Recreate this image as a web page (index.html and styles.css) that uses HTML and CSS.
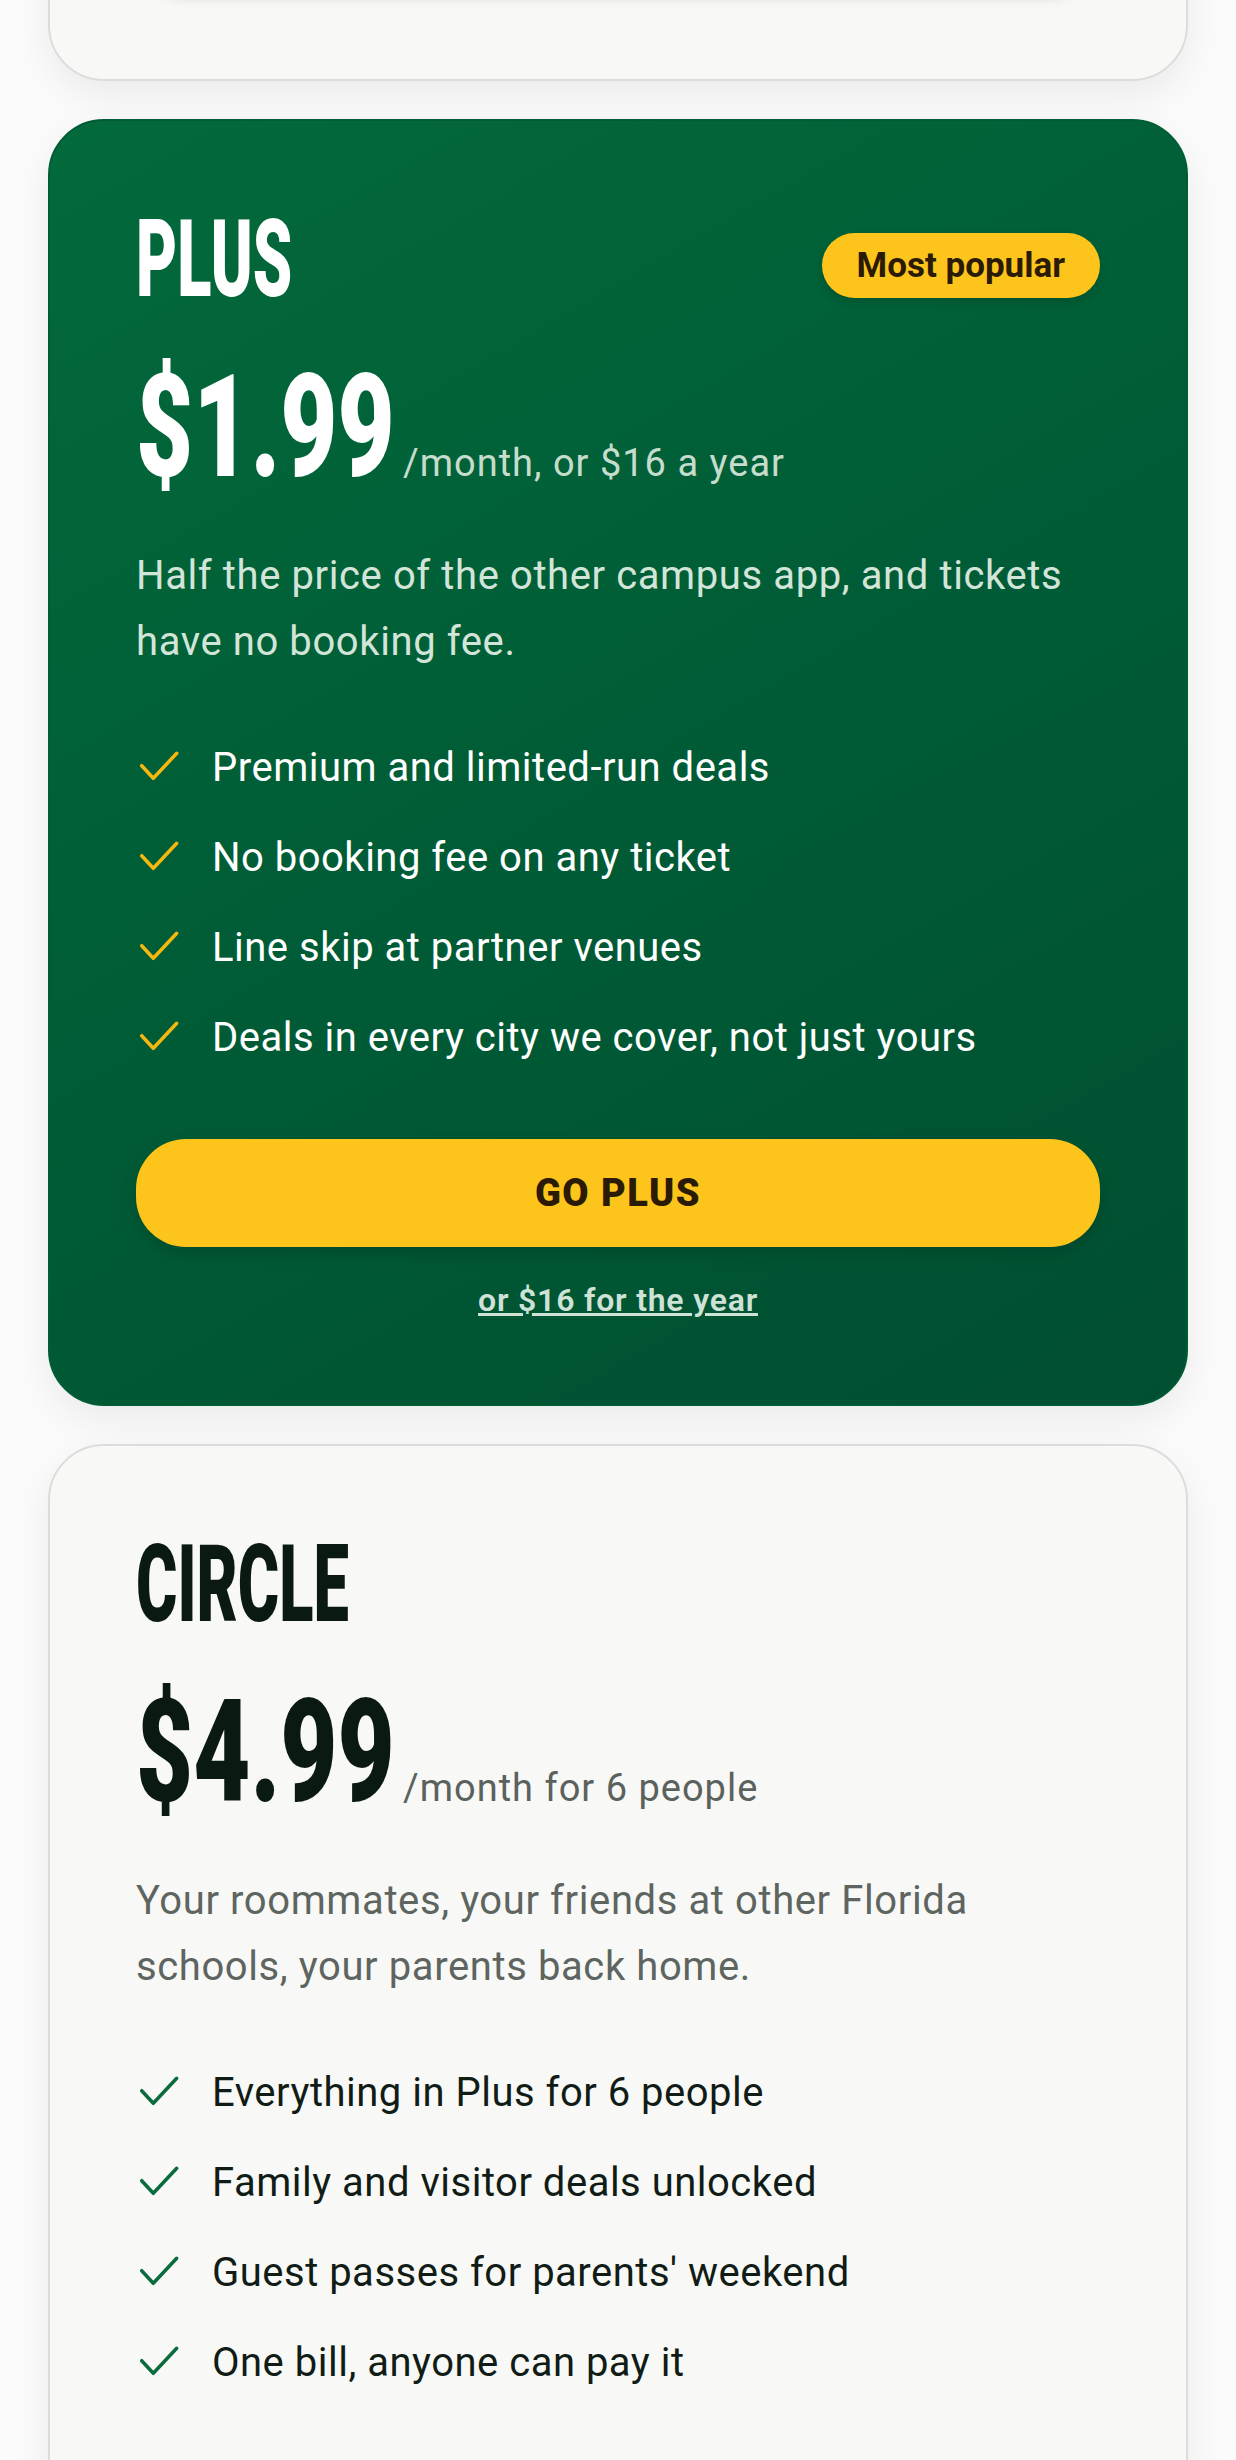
FILE: index.html
```html
<!DOCTYPE html>
<html lang="en">
<head>
    <meta charset="UTF-8">
    <meta name="viewport" content="width=device-width, initial-scale=1.0">
    <title>Plans</title>
    <link rel="stylesheet" href="styles.css">
</head>
<body>
    <main class="plans">
        <section class="plan plan-free">
            <div class="btn btn-light"></div>
        </section>

        <section class="plan plan-plus">
            <div class="plan-head">
                <h2 class="plan-name">PLUS</h2>
                <span class="badge">Most popular</span>
            </div>
            <div class="price">
                <span class="amount"><span class="amount-num">$1.99</span></span>
                <span class="per">/month, or $16 a year</span>
            </div>
            <p class="blurb">Half the price of the other campus app, and tickets have no booking fee.</p>
            <ul class="perks">
                <li><svg class="tick" viewBox="0 0 44 44"><polyline points="5.7 21.7 17.3 34.3 40.7 9.3"/></svg>Premium and limited-run deals</li>
                <li><svg class="tick" viewBox="0 0 44 44"><polyline points="5.7 21.7 17.3 34.3 40.7 9.3"/></svg>No booking fee on any ticket</li>
                <li><svg class="tick" viewBox="0 0 44 44"><polyline points="5.7 21.7 17.3 34.3 40.7 9.3"/></svg>Line skip at partner venues</li>
                <li><svg class="tick" viewBox="0 0 44 44"><polyline points="5.7 21.7 17.3 34.3 40.7 9.3"/></svg>Deals in every city we cover, not just yours</li>
            </ul>
            <button class="btn btn-gold" type="button">GO PLUS</button>
            <a class="alt-link" href="#">or $16 for the year</a>
        </section>

        <section class="plan plan-circle">
            <div class="plan-head">
                <h2 class="plan-name">CIRCLE</h2>
            </div>
            <div class="price">
                <span class="amount"><span class="amount-num">$4.99</span></span>
                <span class="per">/month for 6 people</span>
            </div>
            <p class="blurb">Your roommates, your friends at other Florida schools, your parents back home.</p>
            <ul class="perks">
                <li><svg class="tick" viewBox="0 0 44 44"><polyline points="5.7 21.7 17.3 34.3 40.7 9.3"/></svg>Everything in Plus for 6 people</li>
                <li><svg class="tick" viewBox="0 0 44 44"><polyline points="5.7 21.7 17.3 34.3 40.7 9.3"/></svg>Family and visitor deals unlocked</li>
                <li><svg class="tick" viewBox="0 0 44 44"><polyline points="5.7 21.7 17.3 34.3 40.7 9.3"/></svg>Guest passes for parents' weekend</li>
                <li><svg class="tick" viewBox="0 0 44 44"><polyline points="5.7 21.7 17.3 34.3 40.7 9.3"/></svg>One bill, anyone can pay it</li>
            </ul>
            <button class="btn btn-green" type="button">START A CIRCLE</button>
        </section>
    </main>
</body>
</html>
```

FILE: styles.css
```css
body {
    margin: 0;
    background-color: #fbfbfb;
    font-family: Roboto, 'Liberation Sans', sans-serif;
    color: #121c16;
}
.plans {
    display: flex;
    flex-direction: column;
    gap: 38px;
    padding: 0 48px 80px;
}
.plan {
    display: flex;
    flex-direction: column;
    border: 2px solid #dcdddb;
    border-radius: 56px;
    padding: 84px 86px 85px;
    background-color: #f8f9f7;
    box-shadow: 0 14px 40px rgba(0, 0, 0, 0.07);
}
.plan-free {
    margin-top: -200px;
}
.plan-plus {
    border-color: #005c34;
    background: linear-gradient(150deg, #036a3b 0%, #005c36 50%, #004f31 100%);
    color: #ffffff;
}
.plan-head {
    display: flex;
    justify-content: space-between;
    align-items: flex-start;
    height: 108px;
}
.plan-name {
    margin: 0;
    font-size: 108px;
    font-weight: 900;
    line-height: 1;
    color: #0b1a10;
    transform: scaleX(0.585);
    transform-origin: 0 50%;
}
.plan-plus .plan-name {
    color: #ffffff;
}
.badge {
    margin-top: 28px;
    height: 65px;
    padding: 0 35px;
    border-radius: 33px;
    background-color: #fdc51c;
    color: #2b1b05;
    font-size: 35px;
    font-weight: 700;
    line-height: 65px;
    box-shadow: 0 4px 10px rgba(0, 0, 0, 0.15);
}
.price {
    display: flex;
    align-items: baseline;
    margin-top: 43px;
}
.amount {
    display: inline-block;
    width: 252px;
}
.amount-num {
    display: inline-block;
    font-size: 143px;
    font-weight: 900;
    line-height: 1;
    white-space: nowrap;
    color: #0b1a10;
    transform: scaleX(0.69);
    transform-origin: 0 50%;
}
.plan-plus .amount-num {
    color: #ffffff;
}
.per {
    margin-left: 15px;
    font-size: 38px;
    letter-spacing: 1px;
    color: #5b625d;
}
.plan-plus .per {
    color: #c6dccd;
}
.blurb {
    margin: 44px 0 0;
    font-size: 40px;
    line-height: 66px;
    letter-spacing: 0.6px;
    color: #5e6560;
}
.plan-plus .blurb {
    color: #d3e5d9;
}
.perks {
    list-style: none;
    margin: 68px 0 0;
    padding: 0;
    display: flex;
    flex-direction: column;
    gap: 40px;
}
.perks li {
    display: flex;
    align-items: flex-start;
    gap: 32px;
    font-size: 40px;
    line-height: 50px;
    letter-spacing: 0.5px;
}
.tick {
    flex: none;
    width: 44px;
    height: 44px;
    margin-top: 1px;
    fill: none;
    stroke: #0a6b3d;
    stroke-width: 3.5;
    stroke-linecap: round;
    stroke-linejoin: round;
}
.plan-plus .tick {
    stroke: #f5b80f;
}
.btn {
    display: block;
    width: 100%;
    height: 108px;
    margin-top: 76px;
    border: none;
    border-radius: 50px;
    font-family: Roboto, 'Liberation Sans', sans-serif;
    font-size: 38px;
    font-weight: 900;
    letter-spacing: 1.5px;
    cursor: pointer;
}
.btn-gold {
    background-color: #fdc51b;
    color: #2b1b05;
    box-shadow: 0 6px 16px rgba(0, 0, 0, 0.15);
}
.btn-light {
    margin-top: 0;
    background-color: #f1f2f0;
    box-shadow: 0 4px 12px rgba(0, 0, 0, 0.12);
}
.btn-green {
    background-color: #036a3b;
    color: #ffffff;
}
.alt-link {
    align-self: center;
    margin-top: 34px;
    font-size: 32px;
    font-weight: 600;
    line-height: 38px;
    letter-spacing: 0.8px;
    color: #cfe2d6;
}
```
